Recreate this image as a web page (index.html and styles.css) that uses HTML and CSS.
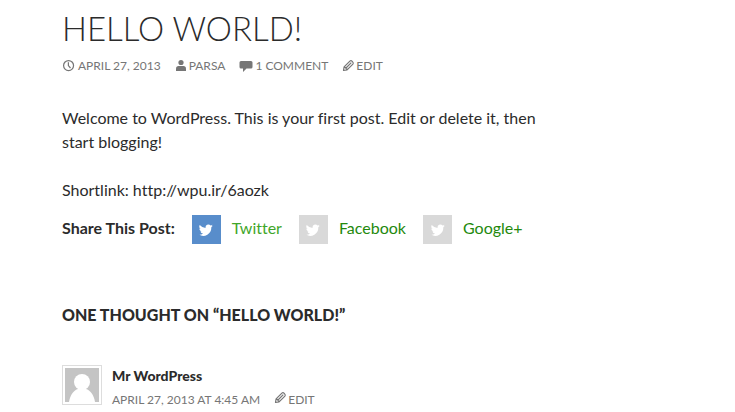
FILE: index.html
```html
<!DOCTYPE html>
<html lang="en">
<head>
<meta charset="utf-8">
<meta name="viewport" content="width=device-width, initial-scale=1">
<title>Hello world!</title>
<link rel="stylesheet" href="styles.css">
</head>
<body>
<svg class="sprite" aria-hidden="true">
  <symbol id="clock" viewBox="0 0 16 16"><circle cx="7.500" cy="7.500" r="5.700" fill="none" stroke="currentColor" stroke-width="1.400"/><path d="M7.300 3.600V7.500l2.400 2.800" fill="none" stroke="currentColor" stroke-width="1.400"/></symbol>
  <symbol id="user" viewBox="0 0 12 14"><circle cx="6" cy="3.500" r="2.600" fill="currentColor"/><path d="M1 12V9.800C1 8 2 7 3.500 7h5C10 7 11 8 11 9.800V12z" fill="currentColor"/></symbol>
  <symbol id="comment" viewBox="0 0 14 14"><path d="M2 2h10a1.500 1.500 0 0 1 1.500 1.500v4.500a1.500 1.500 0 0 1-1.500 1.500H7.500L4 13V9.500H2A1.500 1.500 0 0 1 .5 8V3.500A1.500 1.500 0 0 1 2 2z" fill="currentColor"/></symbol>
  <symbol id="pencil" viewBox="0 0 14 14"><path d="M1.500 11.500l.6-3.600 5.800-5.800c1.500-1.300 4.300 1.500 3 3l-5.800 5.800zM2.600 7.900l2.600 2.600M4 9l5.300-5.300" fill="none" stroke="currentColor" stroke-width="1.200" stroke-linejoin="round"/></symbol>
  <symbol id="bird" viewBox="0 0 24 24"><path d="M23.600 4.900a9.600 9.600 0 0 1-2.800.8 4.900 4.900 0 0 0 2.100-2.700 9.700 9.700 0 0 1-3.100 1.200 4.900 4.900 0 0 0-8.400 4.500A13.900 13.900 0 0 1 1.300 3.600a4.900 4.900 0 0 0 1.500 6.500 4.900 4.900 0 0 1-2.200-.6c0 2.300 1.600 4.400 3.900 4.900a5 5 0 0 1-2.200.1 4.900 4.900 0 0 0 4.600 3.400A9.900 9.900 0 0 1 0 19.900a13.900 13.900 0 0 0 21.100-12.500 10 10 0 0 0 2.500-2.500z" fill="currentColor"/></symbol>
</svg>
<main class="content">
  <article>
    <h1 class="title">Hello world!</h1>
    <div class="meta">
      <a href="#"><svg class="icon"><use href="#clock"/></svg>April 27, 2013</a>
      <a href="#"><svg class="icon narrow"><use href="#user"/></svg>Parsa</a>
      <a href="#comments"><svg class="icon"><use href="#comment"/></svg>1 Comment</a>
      <a class="edit" href="#"><svg class="icon"><use href="#pencil"/></svg>Edit</a>
    </div>
    <p>Welcome to WordPress. This is your first post. Edit or delete it, then start blogging!</p>
    <p class="shortlink">Shortlink: http://wpu.ir/6aozk</p>
    <div class="share">
      <strong>Share This Post:</strong>
      <a class="active" href="#"><span class="tile"><svg><use href="#bird"/></svg></span>Twitter</a>
      <a href="#"><span class="tile"><svg><use href="#bird"/></svg></span>Facebook</a>
      <a href="#"><span class="tile"><svg><use href="#bird"/></svg></span>Google+</a>
    </div>
  </article>
  <section id="comments">
    <h2 class="comments-title">One thought on “Hello world!”</h2>
    <div class="comment">
      <svg class="avatar" viewBox="0 0 34 34" role="img" aria-label="Mr WordPress"><path d="M0 0h34v34H0z" fill="#c4c4c4"/><circle cx="17" cy="14" r="8" fill="#fff"/><path d="M4 34c1-7 5-12 9-13h8c4 1 8 6 9 13z" fill="#fff"/></svg>
      <div>
        <b class="author">Mr WordPress</b>
        <div class="meta">
          <a href="#">April 27, 2013 at 4:45 am</a>
          <a class="edit" href="#"><svg class="icon raised"><use href="#pencil"/></svg>Edit</a>
        </div>
      </div>
    </div>
  </section>
</main>
</body>
</html>
```
FILE: styles.css
```css
body {
  margin: 0;
  background: #fff;
  color: #2b2b2b;
  font: 400 16px/24px Lato, sans-serif;
  font-variant-ligatures: none;
}

a {
  color: inherit;
  text-decoration: none;
}

.sprite {
  position: absolute;
  width: 0;
  height: 0;
}

.content {
  max-width: 474px;
  padding: 10px 62px 0;
}

.title {
  margin: 0 0 10px;
  font-size: 33px;
  font-weight: 300;
  line-height: 36px;
  text-transform: uppercase;
}

.meta {
  display: flex;
  gap: 14px;
  color: #767676;
  font-size: 12px;
  line-height: 20px;
  text-transform: uppercase;
}

.meta a {
  display: flex;
  align-items: center;
  gap: 2px;
}

.meta .edit {
  gap: 0;
}

.icon {
  width: 14px;
  height: 14px;
}

.narrow {
  width: 12px;
}

.raised {
  margin-bottom: 4px;
}

p {
  margin: 30px 0 24px;
}

.shortlink {
  margin: 0 0 10px;
}

.share {
  display: flex;
  align-items: center;
  gap: 17px;
}

.share a {
  display: flex;
  align-items: center;
  gap: 11px;
  color: #24890d;
}

.share .active {
  color: #41a62a;
}

.tile {
  display: flex;
  align-items: center;
  justify-content: center;
  width: 29px;
  height: 29px;
  margin-top: 3px;
  background: #d9d9d9;
  color: #fff;
}

.active .tile {
  background: #588dcb;
}

.tile svg {
  width: 14px;
  height: 14px;
}

.comments-title {
  margin: 59px 0 38px;
  font-size: 16px;
  font-weight: 900;
  line-height: 24px;
  text-transform: uppercase;
}

.comment {
  display: flex;
  gap: 10px;
}

.avatar {
  width: 34px;
  height: 34px;
  padding: 2px;
  border: 1px solid #ddd;
}

.author {
  display: block;
  margin-bottom: 3px;
  font-size: 14px;
  font-weight: 900;
  line-height: 22px;
}
```
